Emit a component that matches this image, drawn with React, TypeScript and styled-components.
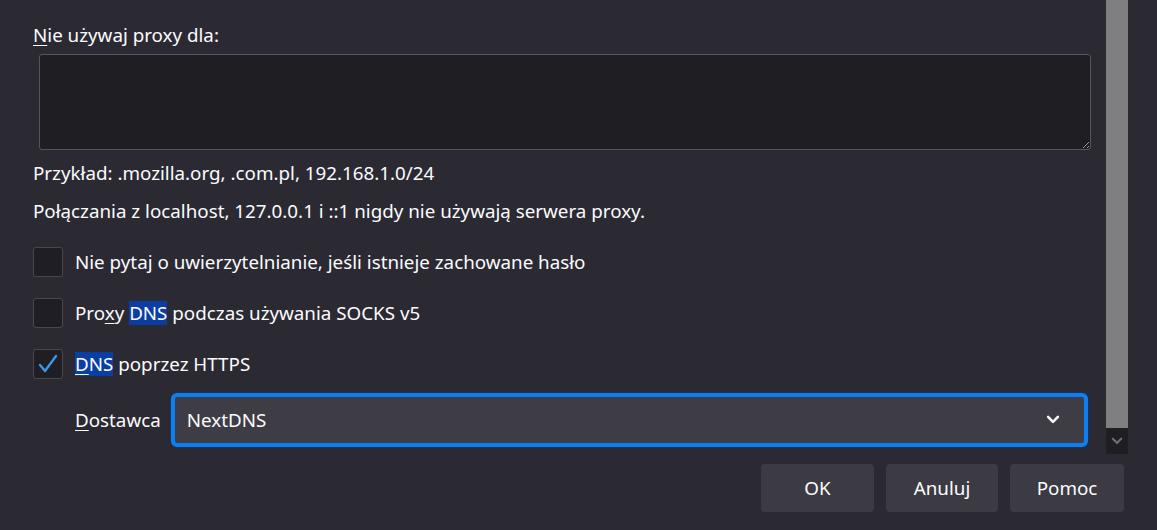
import React, { FC } from 'react';
import styled, { createGlobalStyle } from 'styled-components';

const GlobalStyle = createGlobalStyle`
    html, body {
        margin: 0;
        padding: 0;
        background: #2b2a32;
    }
    body {
        font-family: "Noto Sans", "Open Sans", sans-serif;
        color: #fbfbfe;
    }
`

const Page = styled.div`
    width: 1157px;
    height: 530px;
    display: flex;
    flex-direction: column;
    overflow: hidden;
`

const Main = styled.div`
    height: 454px;
    display: flex;
`

const Content = styled.div`
    flex: 1;
    display: flex;
    flex-direction: column;
    padding-left: 33px;
`

const Label = styled.div<{ $top: number }>`
    margin-top: ${p => p.$top}px;
    font-size: 18.8px;
    line-height: 24px;
    white-space: nowrap;
`

const Key = styled.span`
    text-decoration: underline;
    text-underline-offset: 3px;
    text-decoration-thickness: 1px;
`

const Mark = styled.span`
    background: #0b3ea5;
    display: inline-block;
    line-height: 24px;
`

const Area = styled.textarea`
    margin: 7px 0 0 6px;
    width: 1052px;
    height: 96px;
    box-sizing: border-box;
    background: #1f1e23;
    border: 1px solid #56555d;
    border-radius: 3px;
    resize: both;
    outline: none;
    color: #fbfbfe;
`

const CheckRow = styled.label<{ $top: number }>`
    margin-top: ${p => p.$top}px;
    display: flex;
    align-items: center;
    gap: 12px;
    font-size: 18.8px;
    height: 30px;
    white-space: nowrap;
`

const Box = styled.span`
    width: 30px;
    height: 30px;
    box-sizing: border-box;
    border: 1px solid #48474e;
    border-radius: 3px;
    background: #1f1e24;
    display: flex;
    align-items: center;
    justify-content: center;
`

const ProviderRow = styled.div`
    margin-top: 14px;
    padding-left: 42px;
    display: flex;
    align-items: center;
    gap: 10px;
    font-size: 18.8px;
`

const Select = styled.div`
    width: 917px;
    height: 54px;
    box-sizing: border-box;
    border: 4px solid #0d7ff0;
    border-radius: 6px;
    box-shadow: 0 0 0 1px #17345a;
    background: #3e3d45;
    display: flex;
    align-items: center;
    justify-content: space-between;
    padding: 0 24px 0 12px;
    font-size: 18.8px;
`

const Scrollbar = styled.div`
    width: 22px;
    margin-right: 29px;
    display: flex;
    flex-direction: column;
`

const Thumb = styled.div`
    flex: 1;
    background: #7f7f82;
`

const ArrowButton = styled.div`
    height: 26px;
    background: #1f1e23;
    display: flex;
    align-items: center;
    justify-content: center;
`

const Footer = styled.div`
    display: flex;
    justify-content: flex-end;
    gap: 12px;
    padding: 10px 33px 0 0;
`

const Button = styled.button<{ $w: number }>`
    width: ${p => p.$w}px;
    height: 48px;
    border: none;
    border-radius: 4px;
    background: #3c3b43;
    color: #fbfbfe;
    font-family: "Noto Sans", "Open Sans", sans-serif;
    font-size: 18.8px;
`

const Check: FC = () => (
    <svg width="22" height="22" viewBox="0 0 22 22">
        <path d="M3 12 L8 18 L19 3" fill="none" stroke="#3a97e6" strokeWidth="2.4" strokeLinecap="round" strokeLinejoin="round" />
    </svg>
)

const Chevron: FC<{ color: string; size: number }> = ({ color, size }) => (
    <svg width={size} height={size * 0.7} viewBox="0 0 14 10">
        <path d="M2 2 L7 7 L12 2" fill="none" stroke={color} strokeWidth="2.6" strokeLinecap="round" strokeLinejoin="round" />
    </svg>
)

const App: FC = () => {
    return (
        <Page>
            <GlobalStyle />
            <Main>
                <Content>
                    <Label $top={23}><Key>N</Key>ie używaj proxy dla:</Label>
                    <Area />
                    <Label $top={11}>Przykład: .mozilla.org, .com.pl, 192.168.1.0/24</Label>
                    <Label $top={14}>Połączania z localhost, 127.0.0.1 i ::1 nigdy nie używają serwera proxy.</Label>
                    <CheckRow $top={24}>
                        <Box />
                        Nie pytaj o uwierzytelnianie, jeśli istnieje zachowane hasło
                    </CheckRow>
                    <CheckRow $top={21}>
                        <Box />
                        <span>Pro<Key>x</Key>y <Mark>DNS</Mark> podczas używania SOCKS v5</span>
                    </CheckRow>
                    <CheckRow $top={21}>
                        <Box><Check /></Box>
                        <span><Mark><Key>D</Key>NS</Mark> poprzez HTTPS</span>
                    </CheckRow>
                    <ProviderRow>
                        <span><Key>D</Key>ostawca</span>
                        <Select>
                            <span>NextDNS</span>
                            <Chevron color="#fbfbfe" size={14} />
                        </Select>
                    </ProviderRow>
                </Content>
                <Scrollbar>
                    <Thumb />
                    <ArrowButton>
                        <Chevron color="#6c6b72" size={12} />
                    </ArrowButton>
                </Scrollbar>
            </Main>
            <Footer>
                <Button $w={113}>OK</Button>
                <Button $w={112}>Anuluj</Button>
                <Button $w={114}>Pomoc</Button>
            </Footer>
        </Page>
    )
}

export default App;
